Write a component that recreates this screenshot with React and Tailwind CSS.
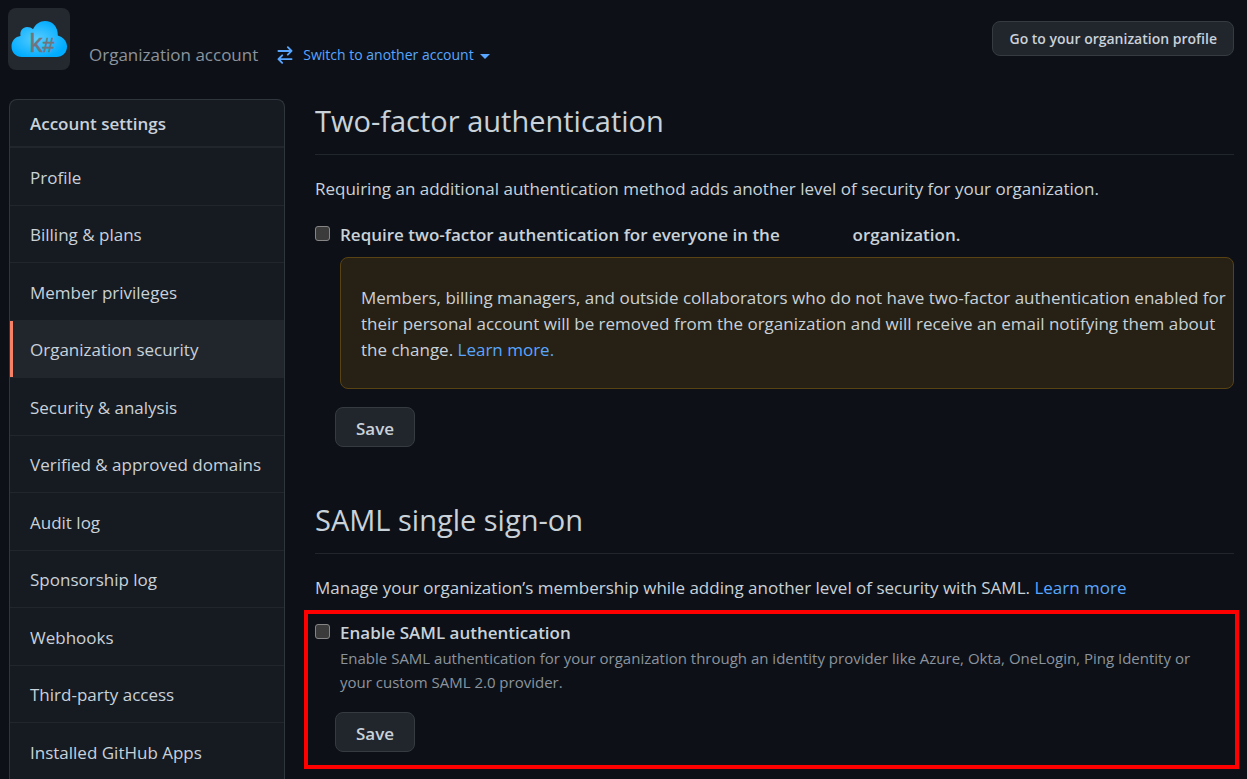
import React from "react";

const navItems = [
  "Profile",
  "Billing & plans",
  "Member privileges",
  "Organization security",
  "Security & analysis",
  "Verified & approved domains",
  "Audit log",
  "Sponsorship log",
  "Webhooks",
  "Third-party access",
  "Installed GitHub Apps",
];

function Logo() {
  return (
    <svg viewBox="0 0 62 62" className="size-[62px] shrink-0 rounded-lg bg-[#24282f]" role="img" aria-label="Organization logo">
      <defs>
        <radialGradient id="cloud" cx="0.45" cy="0.5" r="0.55">
          <stop offset="0" stopColor="#58ccff" />
          <stop offset="1" stopColor="#00acff" />
        </radialGradient>
      </defs>
      <path
        d="M14 49C8 49 3.500 44.500 3.500 38.500C3.500 32.500 7.500 28.600 12.500 28C11.500 22.500 15 19 19 19C21.500 19 23.500 19.800 25 21.300C27.500 16 32 13 37 13C44.500 13 50.300 19 49.800 27.500C55 29 59 33 59 38.500C59 44.500 54.500 49 48.500 49Z"
        fill="url(#cloud)"
      />
      <text
        x="21.500"
        y="43.500"
        fontSize="26"
        fill="#70757c"
        stroke="#70757c"
        strokeWidth="0.500"
        className="font-['Liberation_Sans_Narrow',sans-serif]"
      >
        k<tspan fontSize="21">#</tspan>
      </text>
    </svg>
  );
}

function SwitchIcon() {
  return (
    <svg viewBox="0 0 16 16" className="size-5" fill="currentColor" aria-hidden="true">
      <path d="M5.220 14.780a.75.75 0 001.060-1.060L4.560 12h8.690a.75.75 0 000-1.500H4.560l1.720-1.720a.75.75 0 00-1.060-1.060l-3 3a.75.75 0 000 1.060l3 3zm5.560-6.500a.75.75 0 11-1.060-1.060l1.720-1.720H2.750a.75.75 0 010-1.500h8.690L9.720 2.280a.75.75 0 011.060-1.060l3 3a.75.75 0 010 1.060l-3 3z" />
    </svg>
  );
}

function SaveButton() {
  return (
    <button type="submit" className="ml-5 flex h-10 items-center rounded-lg border border-[#363b42] bg-[#21262d] px-5 pt-1 font-semibold">
      Save
    </button>
  );
}

function Heading({ children }) {
  return <h2 className="border-b border-[#21262d] pb-[14px] text-[29px] leading-[38px]">{children}</h2>;
}

function Checkbox({ id }) {
  return (
    <input
      id={id}
      type="checkbox"
      className="mt-1 size-[15px] shrink-0 appearance-none rounded-[3px] border border-[#858585] bg-[#3b3b3b] checked:bg-[#58a6ff]"
    />
  );
}

export default function App() {
  return (
    <div className="min-h-screen overflow-hidden bg-[#0d1117] font-['Open_Sans','Noto_Sans',sans-serif] text-[17px] leading-[26px] text-[#c9d1d9]">
      <header className="flex items-start pt-2 pr-[13px] pl-2">
        <Logo />
        <div className="flex items-center pt-[34px] pl-[19px]">
          <span className="text-[#8b949e]">Organization account</span>
          <button type="button" className="ml-[17px] flex items-center text-[14px] text-[#58a6ff]">
            <SwitchIcon />
            <span className="ml-2">Switch to another account</span>
            <span className="mt-0.5 ml-[6px] border-x-5 border-t-5 border-x-transparent" />
          </button>
        </div>
        <a href="#profile" className="mt-[13px] ml-auto flex h-[35px] items-center rounded-lg border border-[#363b42] bg-[#21262d] px-4 text-[14px] font-semibold">
          Go to your organization profile
        </a>
      </header>

      <div className="flex items-start pr-[13px] pl-[9px]">
        <nav aria-label="Account settings" className="mt-[29px] w-[276px] shrink-0 rounded-t-lg border border-b-0 border-[#30363d] bg-[#161b22]">
          <h1 className="border-b-2 border-[#21262d] px-5 pt-[11px] pb-[9px] font-semibold">Account settings</h1>
          <ul>
            {navItems.map((item) => {
              const active = item === "Organization security";
              return (
                <li key={item} className="flex border-[#21262d] not-last:border-b odd:min-h-[58px] even:min-h-[57px] last:min-h-14">
                  <a
                    href="#settings"
                    aria-current={active ? "page" : undefined}
                    className={
                      active
                        ? "flex flex-1 items-center border-l-3 border-[#f78166] bg-[#21262d] pt-0.5 pl-[17px]"
                        : "flex flex-1 items-center pt-0.5 pl-5"
                    }
                  >
                    {item}
                  </a>
                </li>
              );
            })}
          </ul>
        </nav>

        <main className="ml-[30px] min-w-0 flex-1 pt-8">
          <section>
            <Heading>Two-factor authentication</Heading>
            <p className="mt-[21px]">
              Requiring an additional authentication method adds another level of security for your organization.
            </p>
            <div className="mt-5 flex gap-[10px]">
              <Checkbox id="two-factor" />
              <label htmlFor="two-factor" className="font-semibold">
                Require two-factor authentication for everyone in the <span className="inline-block w-16" /> organization.
              </label>
            </div>
            <div className="mt-[9px] ml-[25px] rounded-lg border border-[#5a4313] bg-[#272115] pt-[27px] pr-1 pb-[25px] pl-5">
              <p>
                Members, billing managers, and outside collaborators who do not have two-factor authentication enabled for
                their personal account will be removed from the organization and will receive an email notifying them
                about the change. <a href="#learn" className="text-[#58a6ff]">Learn more.</a>
              </p>
            </div>
            <div className="mt-[18px]">
              <SaveButton />
            </div>
          </section>

          <section className="mt-[54px]">
            <Heading>SAML single sign-on</Heading>
            <p className="mt-[21px]">
              Manage your organization’s membership while adding another level of security with SAML.{" "}
              <a href="#saml" className="text-[#58a6ff]">Learn more</a>
            </p>
            <div className="mt-[9px] -mr-[5px] -ml-[11px] border-4 border-[#ff0000] px-[7px] pt-[6px] pb-[13px]">
              <div className="flex gap-[10px]">
                <Checkbox id="saml" />
                <div>
                  <label htmlFor="saml" className="font-semibold">Enable SAML authentication</label>
                  <p className="pr-5 text-[15px] leading-6 text-[#8b949e]">
                    Enable SAML authentication for your organization through an identity provider like Azure, Okta, OneLogin, Ping Identity or your custom SAML 2.0 provider.
                  </p>
                </div>
              </div>
              <div className="mt-[18px]">
                <SaveButton />
              </div>
            </div>
          </section>
        </main>
      </div>
    </div>
  );
}
